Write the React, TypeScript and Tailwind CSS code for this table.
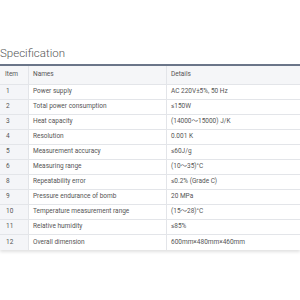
import React from 'react';

const rows: [string, string, string][] = [
  ['1', 'Power supply', 'AC 220V±5%, 50 Hz'],
  ['2', 'Total power consumption', '≤150W'],
  ['3', 'Heat capacity', '(14000～15000) J/K'],
  ['4', 'Resolution', '0.001 K'],
  ['5', 'Measurement accuracy', '≤60J/g'],
  ['6', 'Measuring range', '(10～35)°C'],
  ['8', 'Repeatability error', '≤0.2% (Grade C)'],
  ['9', 'Pressure endurance of bomb', '20 MPa'],
  ['10', 'Temperature measurement range', '(15～28)°C'],
  ['11', 'Relative humidity', '≤85%'],
  ['12', 'Overall dimension', '600mm×480mm×460mm'],
];

const App = () => {
  return (
    <div
      className="w-[300px] h-[300px] overflow-hidden bg-white pt-[46px]"
      style={{ fontFamily: 'Roboto, "Noto Sans CJK SC", sans-serif' }}
    >
      <h2 className="text-[11.5px] leading-[14px] font-light text-[#555] pb-[4px] border-b-2 border-[#6b7689]">
        Specification
      </h2>

      {/* spec table */}
      <div className="shadow-[0_2px_3px_rgba(0,0,0,0.12)] text-[6.5px] text-[#555]">
        <div className="flex h-[19px] bg-[#f5f6f8] border-b border-[#e3e5e9]">
          <div className="w-[29px] shrink-0 pl-[5px] flex items-center border-r border-[#e3e5e9]">Item</div>
          <div className="w-[138px] shrink-0 pl-[4px] flex items-center border-r border-[#e3e5e9]">Names</div>
          <div className="flex-1 pl-[4px] flex items-center">Details</div>
        </div>
        {rows.map(([no, name, detail]) => (
          <div key={no} className="flex h-[15px] border-b border-[#e3e5e9] last:border-b-0">
            <div className="w-[29px] shrink-0 pl-[6px] flex items-center bg-[#f4f5f8] border-r border-[#e3e5e9]">{no}</div>
            <div className="w-[138px] shrink-0 pl-[4px] flex items-center border-r border-[#e3e5e9]">{name}</div>
            <div className="flex-1 pl-[4px] flex items-center">{detail}</div>
          </div>
        ))}
      </div>
    </div>
  );
};

export default App;
